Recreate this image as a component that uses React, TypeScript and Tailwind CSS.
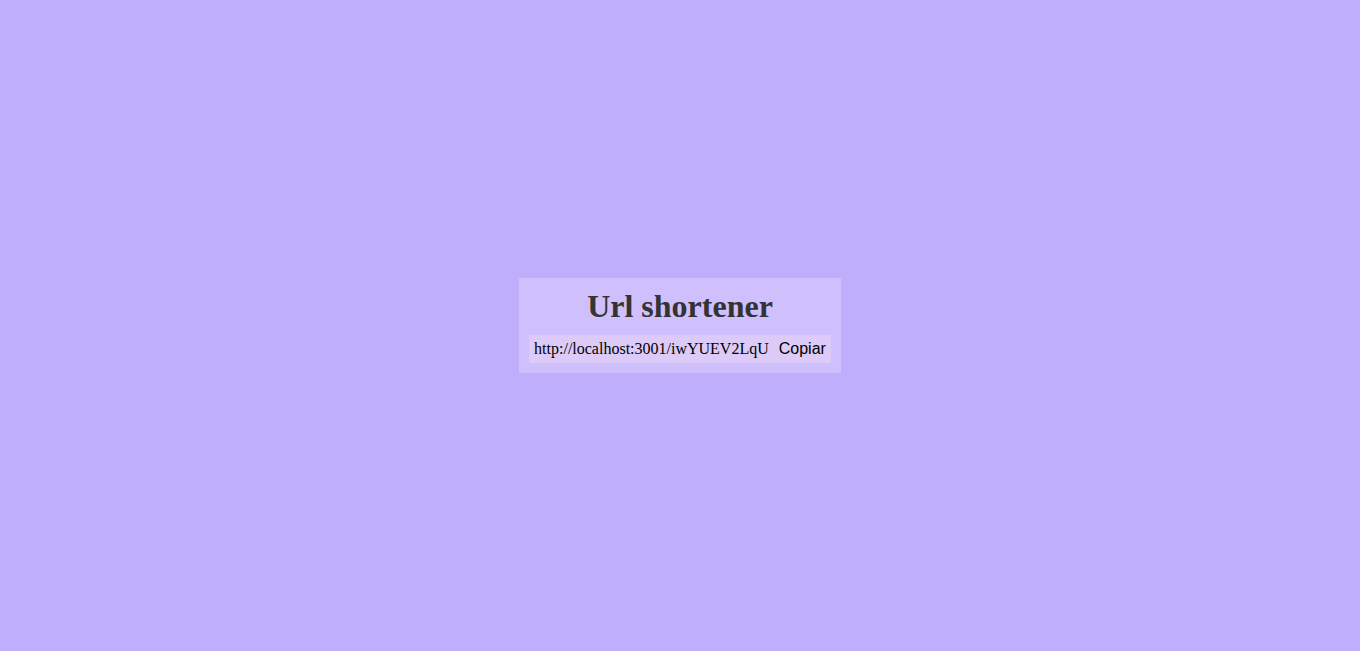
const App = () => {
  return (
    <div className="flex min-h-screen items-center justify-center bg-[#bfaefb]">
      <div className="flex flex-col items-center gap-[11px] bg-[#cfbffd] p-[10px]">
        <h1 className="text-[32px] font-bold leading-[36px] text-[#333333] font-['Liberation_Serif',serif]">
          Url shortener
        </h1>
        <div className="flex items-center gap-[10px] bg-[#dccbf9] p-[5px] text-[16px] leading-[18px] text-black">
          <span className="font-['Liberation_Serif',serif]">http://localhost:3001/iwYUEV2LqU</span>
          <button className="font-['Liberation_Sans',sans-serif] cursor-pointer">Copiar</button>
        </div>
      </div>
    </div>
  );
};

export default App;
